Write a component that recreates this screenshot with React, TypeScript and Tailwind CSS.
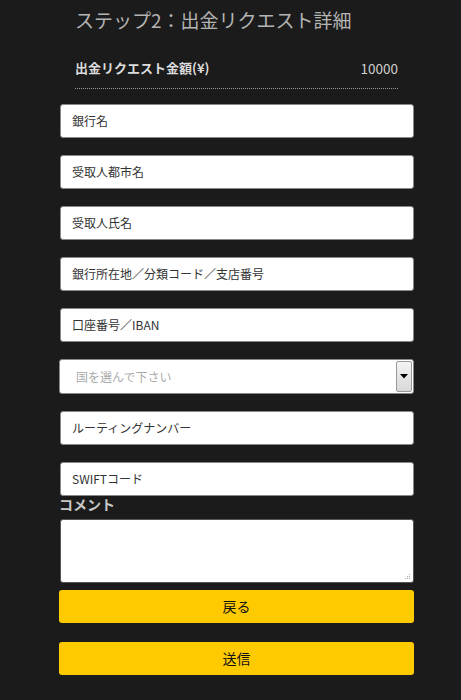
import React from 'react';

const font = { fontFamily: '"Noto Sans CJK JP", "Liberation Sans", sans-serif' };

const fields = [
  '銀行名',
  '受取人都市名',
  '受取人氏名',
  '銀行所在地／分類コード／支店番号',
  '口座番号／IBAN',
];

const Field: React.FC<{ label: string }> = ({ label }) => (
  <div className="h-[34px] w-full rounded-[3px] border border-[#888] bg-white px-[11px] flex items-center text-[12px] text-[#333]">
    {label}
  </div>
);

export default function App() {
  return (
    <div className="min-h-[700px] w-[461px] bg-[#1b1b1b]" style={font}>
      <div className="ml-[59px] w-[355px] pb-[26px]">
        <div className="px-[16px]">
          <h2 className="pt-[7px] text-[19px] leading-[26px] text-[#b4b4b4]">ステップ2：出金リクエスト詳細</h2>
          <div className="mt-[25px] flex items-center justify-between border-b border-dotted border-[#9a9a9a] pb-[10px]">
            <span className="text-[13px] font-bold text-[#dcdcdc]">出金リクエスト金額(¥)</span>
            <span className="text-[13.5px] text-[#cfcfcf]">10000</span>
          </div>
        </div>

        <div className="mt-[15px] flex flex-col gap-[17px] pl-[1px]">
          {fields.map((f) => (
            <Field key={f} label={f} />
          ))}
          <div className="-ml-[1px] flex h-[35px] w-[355px] items-center justify-between rounded-[3px] border border-[#888] bg-white pl-[16px] pr-[1px] text-[12px] text-[#aaa]">
            <span>国を選んで下さい</span>
            <div className="flex h-[31px] w-[16px] items-center justify-center rounded-[2px] border border-[#999] bg-gradient-to-b from-[#f4f4f4] to-[#d8d8d8]">
              <svg width="8" height="5" viewBox="0 0 8 5">
                <path d="M0 0h8L4 4.5z" fill="#000" />
              </svg>
            </div>
          </div>
          <Field label="ルーティングナンバー" />
          <Field label="SWIFTコード" />
        </div>

        <div className="-mt-[1px] text-[14px] font-bold leading-[18px] text-[#c8c8c8]">コメント</div>
        <div className="relative mt-[6px] ml-[1px] h-[64px] rounded-[3px] border border-[#555] bg-white">
          <svg className="absolute bottom-[2px] right-[2px]" width="6" height="6" viewBox="0 0 6 6">
            <rect x="4" y="0" width="1" height="1" fill="#aaa" />
            <rect x="2" y="2" width="1" height="1" fill="#aaa" />
            <rect x="4" y="2" width="1" height="1" fill="#aaa" />
            <rect x="0" y="4" width="1" height="1" fill="#aaa" />
            <rect x="2" y="4" width="1" height="1" fill="#aaa" />
            <rect x="4" y="4" width="1" height="1" fill="#aaa" />
          </svg>
        </div>
        <button className="mt-[7px] flex h-[33px] w-full items-center justify-center rounded-[3px] bg-[#ffcb00] text-[14px] text-[#111]">
          戻る
        </button>
        <button className="mt-[19px] flex h-[33px] w-full items-center justify-center rounded-[3px] bg-[#ffcb00] text-[14px] text-[#111]">
          送信
        </button>
      </div>
    </div>
  );
}
